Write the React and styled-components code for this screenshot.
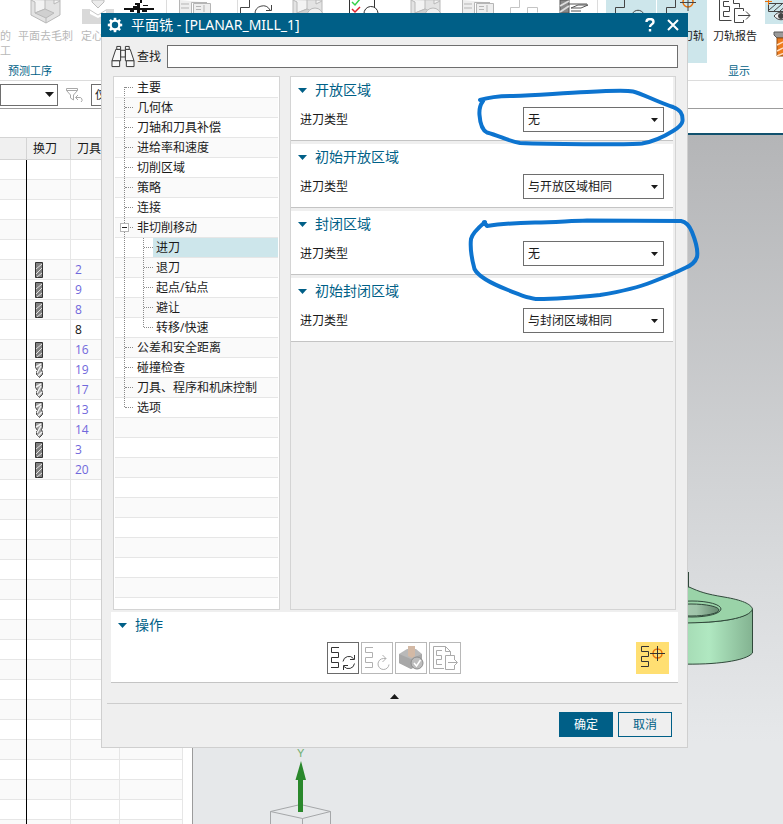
/**
 * ========================================
 * App.jsx - 平面铣 operation dialog over the CAM workspace
 * ========================================
 */

import React from 'react';
import styled, { createGlobalStyle } from 'styled-components';

const GlobalStyle = createGlobalStyle`
  :root {
    --color-primary: #005f87;
    --color-text: #1a1a1a;
    --color-panel: #efefef;
    --color-line: #d4d4d4;
    --color-row-line: #e6e6e6;
    --color-stripe: #fafafa;
    --color-active: #cde6eb;
    --color-field: #6e6e6e;
  }

  * {
    box-sizing: border-box;
  }

  body {
    margin: 0;
    background: #ffffff;
    color: var(--color-text);
    font-family: 'Open Sans', 'Noto Sans CJK SC', sans-serif;
    font-size: 12px;
    line-height: 20px;
  }

  button,
  input,
  select {
    font: inherit;
    color: inherit;
    margin: 0;
  }
`;

/* ---------- data ---------- */

const TOOL_ROWS = [
  {}, {}, {}, {}, {},
  { tool: 'mill', number: 2 },
  { tool: 'mill', number: 9 },
  { tool: 'mill', number: 8 },
  { number: 8, plain: true },
  { tool: 'mill', number: 16 },
  { tool: 'drill', number: 19 },
  { tool: 'drill', number: 17 },
  { tool: 'drill', number: 13 },
  { tool: 'drill', number: 14 },
  { tool: 'mill', number: 3 },
  { tool: 'mill', number: 20 },
  ...Array.from({ length: 18 }, () => ({})),
];

const TREE = [
  { label: '主要', first: true },
  { label: '几何体' },
  { label: '刀轴和刀具补偿' },
  { label: '进给率和速度' },
  { label: '切削区域' },
  { label: '策略' },
  { label: '连接' },
  { label: '非切削移动', expanded: true },
  { label: '进刀', child: true, selected: true },
  { label: '退刀', child: true },
  { label: '起点/钻点', child: true },
  { label: '避让', child: true },
  { label: '转移/快速', child: true, last: true },
  { label: '公差和安全距离' },
  { label: '碰撞检查' },
  { label: '刀具、程序和机床控制' },
  { label: '选项', last: true },
  ...Array.from({ length: 10 }, () => ({})),
];

const SECTIONS = [
  { id: 'open', title: '开放区域', value: '无' },
  { id: 'open-initial', title: '初始开放区域', value: '与开放区域相同' },
  { id: 'closed', title: '封闭区域', value: '无' },
  { id: 'closed-initial', title: '初始封闭区域', value: '与封闭区域相同' },
];

/* ---------- icons ---------- */

const Caret = ({ up = false, small = false, color = 'var(--color-text)' }) => (
  <CaretSvg width={small ? 7 : 9} height={small ? 4 : 5} viewBox="0 0 9 5" preserveAspectRatio="none" aria-hidden="true">
    <path d={up ? 'M0 5h9L4.500 0z' : 'M0 0h9L4.500 5z'} fill={color} />
  </CaretSvg>
);

const GearIcon = () => (
  <svg width="16" height="16" viewBox="0 0 16 16" aria-hidden="true">
    <circle cx="8" cy="8" r="4.400" fill="none" stroke="#fff" strokeWidth="2.400" />
    {[0, 45, 90, 135, 180, 225, 270, 315].map(a => (
      <rect key={a} x="6.700" y="0.800" width="2.600" height="2.800" fill="#fff" transform={`rotate(${a} 8 8)`} />
    ))}
  </svg>
);

const BinocularsIcon = () => (
  <svg width="24" height="24" viewBox="0 0 24 24" fill="#f8f8f8" stroke="#333" aria-hidden="true">
    <path d="M9.500 5.500h5v7h-5z" />
    <path d="M4.500 4.500h5v12h-9zM14.500 4.500h5l4 12h-9z" />
    <path d="M5.500 1.500h4v3h-4zM14.500 1.500h4v3h-4z" />
    <path d="M.5 16.500h8v6h-8zM15.500 16.500h8v6h-8z" />
  </svg>
);

const BoxIcon = ({ badge = false }) => (
  <svg width="32" height="24" viewBox="0 0 32 24" stroke="#b9b9b9" aria-hidden="true">
    <path d="M1 0v15l15 8 14-8V0z" fill="#e3e3e3" />
    <path d="M1 0l4 2v11l10-4V0h9v4l6-3" fill="#f3f3f3" />
    <path d="M5 13l10-4 9 4-8 5zM16 18v5" fill="#d0d0d0" />
    {badge && <circle cx="23" cy="16" r="8" fill="#f0f0f0" />}
  </svg>
);

const SpotDrillIcon = () => (
  <svg width="32" height="24" viewBox="0 0 32 24" aria-hidden="true">
    <path d="M0 9h8v5l8 4 8-4V9h8v15H0z" fill="#d9d9d9" />
    <path d="M8 10l8 5 8-5" fill="none" stroke="#c7c7c7" />
    <path d="M10 0h12v2l-6 6-6-6z" fill="#ececec" stroke="#bdbdbd" />
  </svg>
);

const SparkIcon = () => (
  <svg width="32" height="13" viewBox="0 0 32 13" fill="#111" aria-hidden="true">
    <path d="M1 8h30v2H1zM14 3h3v10h-3zM12 3h4v2h-4zM17 0h2v3h-2zM20 5h5v1h-5zM7 10h4v2H7zM10 6h4v2h-4zM19 10h5v2h-5z" />
  </svg>
);

const ListIcon = () => (
  <svg width="32" height="14" viewBox="0 0 32 14" fill="#eee" stroke="#b5b5b5" aria-hidden="true">
    <path d="M.5 0v13.500h12V2.500H28" />
    <path d="M14.500 3.500h17v10h-17zM17 6.500h5M17 9.500h5M25 5v7M2 4h8M2 8h8" />
  </svg>
);

const StepIcon = ({ kind }) => (
  <svg width="32" height="24" viewBox="0 0 32 24" fill="none" stroke={kind === 'muted' ? '#c4c4c4' : '#444'} aria-hidden="true">
    <path d="M.5 14V7.500h9V0" />
    {kind === 'arrow' && <path d="M15 14a8 8 0 0 1 15-4M31.500 5v5.500H26" />}
    {kind === 'eye' && <path d="M17 14c3-5 9-5 12 0" />}
    {kind === 'muted' && <path d="M17.500 14V7.500h10v5" />}
    {kind === 'target' && (
      <>
        <circle cx="22" cy="2" r="5" stroke="#e8720c" strokeWidth="1.500" />
        <path d="M14 2.500h16M22 0v11" />
      </>
    )}
  </svg>
);

const ChecklistIcon = () => (
  <svg width="32" height="14" viewBox="0 0 32 14" fill="none" aria-hidden="true">
    <path d="M1.500 0v13M26.500 0v8" stroke="#333" />
    <path d="M4 2l3 3 5-6" stroke="#35d04a" strokeWidth="1.500" />
    <path d="M4 9l3 3 5-5" stroke="#e0202c" strokeWidth="1.500" />
    <path d="M16 14a7 7 0 0 1 14-1" stroke="#333" />
  </svg>
);

const CutterIcon = () => (
  <svg width="32" height="14" viewBox="0 0 32 14" fill="none" stroke="#555" aria-hidden="true">
    <path d="M1 0h9v13H1z" fill="#888" />
    <path d="M1 6l9-5M1 12l9-6" stroke="#ddd" strokeWidth="2" />
    <path d="M12 8l7-3h10l-7 3zM12 11h10M10 4h18" />
  </svg>
);

const ReportIcon = () => (
  <svg width="32" height="26" viewBox="0 0 32 26" fill="none" stroke="#444" aria-hidden="true">
    <path d="M.5 0v20.500h12M14.500 0v3.500h6v4" />
    <path d="M10 1.500H4.500v5h6v5h-6v5h6" />
    <path d="M24.500 11V8.500h-9v14h9V20M19 15.500h12M27 11.500l4 4-4 4" />
  </svg>
);

const HatchIcon = () => (
  <svg width="32" height="22" viewBox="0 0 32 22" fill="none" stroke="#444" aria-hidden="true">
    <path d="M3.500 3.500h26v8h-26zM4 10l7-6M9 11l8-7M15 11l8-7" />
    <path d="M9 16c4-5 10-5 14 0-4 5-10 5-14 0z" fill="#eee" />
    <circle cx="16" cy="16" r="2.500" fill="#444" />
    <path d="M0 1.500h7M3.500 0v5" stroke="#e8720c" />
  </svg>
);

const OrangeDrillIcon = () => (
  <svg width="20" height="26" viewBox="0 0 20 26" aria-hidden="true">
    <path d="M1 1h18v3l-3 3H4L1 4z" fill="#9a9a9a" stroke="#5b5b5b" />
    <path d="M4 7h12v18H4z" fill="#ee7b1c" stroke="#8e4a11" />
    <path d="M4 14l12-6M4 20l12-6M4 25l12-5" stroke="#ffe0c0" strokeWidth="1.500" />
  </svg>
);

const FilterIcon = () => (
  <svg width="17" height="16" viewBox="0 0 17 16" fill="none" stroke="#a8a8a8" aria-hidden="true">
    <path d="M.5 1.500h11v2L7.500 8v5l-3-2V8L.5 3.500zM.5 3.500h11" />
    <path d="M10 10.500h3a2.500 2.500 0 0 1 2 4.500M12 8l-2.500 2.500L12 13" />
  </svg>
);

const CutterGlyph = ({ kind }) => (
  <svg width="8" height="16" viewBox="0 0 8 16" aria-hidden="true">
    {kind === 'mill' ? (
      <>
        <path d="M.5.5h7v15h-7z" fill="#808080" stroke="#333" />
        <path d="M1 7l6-5M1 12l6-6M2 15l5-4" stroke="#e2e2e2" />
      </>
    ) : (
      <>
        <path d="M.5.500h7v5l-1 2 1 3v2l-3 3-3-3v-3l1-1-2-3z" fill="#9c9c9c" stroke="#444" />
        <path d="M1 5l5-3M2 11l4-7M3 14l4-4" stroke="#f3f3f3" strokeWidth="1.500" />
      </>
    )}
  </svg>
);

const SNAKE = 'M11 4.500H3.500v5h7v5h-7v5h7v5H3';

const GenerateIcon = () => (
  <svg width="30" height="30" viewBox="0 0 30 30" fill="none" stroke="#333" aria-hidden="true">
    <path d={SNAKE} />
    <path d="M15 18.500a6 6 0 0 1 10.500-3M26.500 12v4.500H22M26.500 20.500a6 6 0 0 1-10.500 3M15.500 27v-4.500H20" />
  </svg>
);

const ReplayIcon = () => (
  <svg width="30" height="30" viewBox="0 0 30 30" fill="none" stroke="#b0b0b0" aria-hidden="true">
    <path d={SNAKE} />
    <path d="M24 15.500h-2.500a5.500 5.500 0 1 0 5.500 6M20.500 12l3.500 3.500-3.500 3.500" />
  </svg>
);

const VerifyIcon = () => (
  <svg width="30" height="30" viewBox="0 0 30 30" aria-hidden="true">
    <path d="M3 11l8-5h9l6 5v9l-11 6-12-6z" fill="#b9b9b9" />
    <path d="M3 11l12 5 11-5v9l-11 6-12-6z" fill="#a8a8a8" />
    <path d="M12 3h7v10l-3 2-4-2z" fill="#d3b9a5" />
    <circle cx="21" cy="20" r="6" fill="#bdbdbd" stroke="#8e8e8e" />
    <path d="M18 20l2.500 3 4-6" fill="none" stroke="#fff" strokeWidth="1.500" />
  </svg>
);

const ListReportIcon = () => (
  <svg width="30" height="30" viewBox="0 0 30 30" fill="none" stroke="#ababab" aria-hidden="true">
    <path d="M14 25.500H3.500V3.500h12l5 5v4M15.500 3.500v5h5" />
    <path d="M12 7.500H6.500v5h5v4h-5v5H12" />
    <path d="M24.500 16v-3.500h-9v14h9V23M18 19.500h9M24 16l3.500 3.500L24 23" />
  </svg>
);

const ShowPathIcon = () => (
  <svg width="32" height="32" viewBox="0 0 32 32" fill="none" stroke="#333" aria-hidden="true">
    <path d="M13 4.500H5.500v5h7v5h-7v5h7v5H5" />
    <circle cx="21.500" cy="11.500" r="4.500" stroke="#e8720c" strokeWidth="1.500" />
    <path d="M14 11.500h15M21.500 4v15" />
  </svg>
);

const HelpIcon = () => (
  <svg width="12" height="14" viewBox="0 0 12 14" fill="none" stroke="#fff" strokeWidth="2.400" aria-hidden="true">
    <path d="M2.500 4c0-4 7-4 7 0 0 2.500-3.500 2-3.500 5" />
    <path d="M6 11v2.500" />
  </svg>
);

const CloseIcon = () => (
  <svg width="12" height="12" viewBox="0 0 12 12" stroke="#fff" strokeWidth="2" aria-hidden="true">
    <path d="M1 1l10 10M11 1L1 11" />
  </svg>
);

/* ---------- workspace behind the dialog ---------- */

const Ribbon = () => (
  <RibbonBar>
    <RibbonGroup $width="167px">
      <RibbonTools>
        <RibbonTool $width="17px" $start disabled>
          <RibbonIcon />
          <span>的<br />工</span>
        </RibbonTool>
        <RibbonTool $width="57px" disabled>
          <RibbonIcon><BoxIcon /></RibbonIcon>
          平面去毛刺
        </RibbonTool>
        <RibbonTool $width="47px" disabled>
          <RibbonIcon><SpotDrillIcon /></RibbonIcon>
          定心钻
        </RibbonTool>
        <RibbonTool $width="36px">
          <RibbonIcon><SparkIcon /></RibbonIcon>
        </RibbonTool>
      </RibbonTools>
      <RibbonLabel $indent="8px">预测工序</RibbonLabel>
    </RibbonGroup>
    <RibbonGroup $width="71px">
      <RibbonTools>
        <RibbonTool $width="56px">
          <RibbonIcon><ListIcon /></RibbonIcon>
        </RibbonTool>
      </RibbonTools>
    </RibbonGroup>
    <RibbonGroup $width="360px">
      <RibbonStrip>
        <StepIcon kind="arrow" />
        <BoxIcon badge />
        <ChecklistIcon />
        <BoxIcon badge />
        <ListIcon />
        <StepIcon kind="muted" />
        <CutterIcon />
      </RibbonStrip>
    </RibbonGroup>
    <RibbonGroup $grow>
      <RibbonTools $indent="8px">
        <RibbonTool $width="51px" $active>
          <RibbonIcon><StepIcon kind="eye" /></RibbonIcon>
        </RibbonTool>
        <RibbonTool $width="51px" $active>
          <RibbonIcon><StepIcon kind="target" /></RibbonIcon>
          显示刀轨
        </RibbonTool>
        <RibbonTool $width="54px">
          <RibbonIcon><ReportIcon /></RibbonIcon>
          刀轨报告
        </RibbonTool>
        <RibbonStack>
          <SmallTool $active aria-label="显示毛坯"><HatchIcon /></SmallTool>
          <SmallTool aria-label="刀具"><OrangeDrillIcon /></SmallTool>
        </RibbonStack>
      </RibbonTools>
      <RibbonLabel $indent="130px">显示</RibbonLabel>
    </RibbonGroup>
  </RibbonBar>
);

const ToolTable = () => (
  <TablePane>
    <Table>
      <colgroup>
        <TableCol $width="27px" />
        <TableCol $width="44px" />
        <TableCol $width="49px" />
        <TableCol $width="63px" />
      </colgroup>
      <thead>
        <tr>
          <HeadCell />
          <HeadCell>换刀</HeadCell>
          <HeadCell>刀具号</HeadCell>
          <HeadCell />
        </tr>
      </thead>
      <tbody>
        {TOOL_ROWS.map((row, i) => (
          <BodyRow key={i}>
            <BodyCell $heavy />
            <BodyCell $icon>{row.tool && <CutterGlyph kind={row.tool} />}</BodyCell>
            <BodyCell $plain={row.plain}>{row.number}</BodyCell>
            <BodyCell />
          </BodyRow>
        ))}
      </tbody>
    </Table>
  </TablePane>
);

const Scene = () => (
  <SceneSvg width="590" height="689" viewBox="193 135 590 689" aria-hidden="true">
    <defs>
      <linearGradient id="side" x1="0" x2="1">
        <stop offset="0" stopColor="#a3d8b2" />
        <stop offset="0.4" stopColor="#b0e8c1" />
        <stop offset="1" stopColor="#83b391" />
      </linearGradient>
      <linearGradient id="hole" x1="0" x2="1">
        <stop offset="0" stopColor="#b4d4bc" />
        <stop offset="0.600" stopColor="#9fc4a9" />
        <stop offset="1" stopColor="#64876e" />
      </linearGradient>
    </defs>
    <path d="M680 622C720 624 748 618 752.500 609V653C746 661 715 665 680 664z" fill="url(#side)" stroke="#30483a" />
    <path d="M680 587H689C700 592 706 594 724 597C742 600 751 604 752.500 609C750 618 722 623 680 623z" fill="#9ad3a8" stroke="#30483a" />
    <ellipse cx="692" cy="609" rx="29" ry="8" fill="#9ad3a8" stroke="#30483a" />
    <ellipse cx="691" cy="610" rx="28" ry="6" fill="url(#hole)" stroke="#30483a" />
    <path d="M688.500 572v15" stroke="#30483a" />
    <path d="M270.500 811.500L300.500 804.500L330.500 811.500L302.500 818.500zM270.500 811.500V824M302.500 818.500V824M330.500 811.500V824" fill="none" stroke="#a5a7a9" />
    <path d="M298 812V780H295.500L301 761L306 780H303V812z" fill="#2a882c" />
    <AxisLabel x="297" y="757">Y</AxisLabel>
  </SceneSvg>
);

/* ---------- dialog ---------- */

const TreeItem = ({ label, first, expanded, child, selected, last }) => {
  if (!label) return <TreeRow aria-hidden="true" />;

  return (
    <TreeRow>
      {expanded ? (
        <ExpandColumn>
          <ExpandButton aria-label="折叠" aria-expanded="true">
            <svg width="7" height="7" viewBox="0 0 7 7" aria-hidden="true">
              <path d="M1 3.500h5" stroke="#222" />
            </svg>
          </ExpandButton>
        </ExpandColumn>
      ) : (
        <Branch $first={first} $end={last && !child}>
          <BranchArm $joined={!child} />
        </Branch>
      )}
      {child && (
        <Branch $end={last} $nested>
          <BranchArm $joined />
        </Branch>
      )}
      <TreeButton $child={child} $selected={selected} aria-current={selected ? 'true' : undefined}>{label}</TreeButton>
    </TreeRow>
  );
};

const ParameterSection = ({ id, title, value }) => (
  <Section>
    <SectionTitle><Caret color="var(--color-primary)" />{title}</SectionTitle>
    <Field>
      <label htmlFor={id}>进刀类型</label>
      <SelectBox>
        <Select id={id} defaultValue={value}>
          <option>{value}</option>
        </Select>
        <Caret small />
      </SelectBox>
    </Field>
  </Section>
);

const OperationDialog = () => (
  <Dialog role="dialog" aria-labelledby="dialog-title">
    <TitleBar>
      <GearIcon />
      <Title id="dialog-title">平面铣 - [PLANAR_MILL_1]</Title>
      <TitleButton aria-label="帮助"><HelpIcon /></TitleButton>
      <TitleButton aria-label="关闭"><CloseIcon /></TitleButton>
    </TitleBar>
    <DialogBody>
      <SearchRow>
        <BinocularsIcon />
        <label htmlFor="search">查找</label>
        <SearchInput id="search" type="text" />
      </SearchRow>
      <Columns>
        <Tree aria-label="平面铣">
          {TREE.map((item, i) => <TreeItem key={i} {...item} />)}
        </Tree>
        <Parameters>
          {SECTIONS.map(section => <ParameterSection key={section.id} {...section} />)}
        </Parameters>
      </Columns>
      <Actions>
        <SectionTitle><Caret color="var(--color-primary)" />操作</SectionTitle>
        <ActionRow>
          <ActionGroup>
            <ActionButton $strong aria-label="生成"><GenerateIcon /></ActionButton>
            <ActionButton aria-label="重播"><ReplayIcon /></ActionButton>
            <ActionButton aria-label="确认"><VerifyIcon /></ActionButton>
            <ActionButton aria-label="列表"><ListReportIcon /></ActionButton>
          </ActionGroup>
          <HighlightButton aria-label="显示刀轨"><ShowPathIcon /></HighlightButton>
        </ActionRow>
      </Actions>
      <CollapseButton aria-label="收起"><Caret up /></CollapseButton>
      <Footer>
        <FooterButton $primary>确定</FooterButton>
        <FooterButton>取消</FooterButton>
      </Footer>
    </DialogBody>
  </Dialog>
);

// hand-drawn marks round the two 无 drop-downs
const Annotations = () => (
  <AnnotationSvg width="783" height="320" viewBox="0 0 783 320" aria-hidden="true">
    <path d="M480 100C490 97 500 96 513 96C540 95 562 93 587 92C605 91 625 90 633 91.500C641 93 655 101 673 107C680 110 683 113 682.500 121C682 125 678 128 673 131C665 136 652 142 642 143.500C625 145 545 144 520 143C508 141 500 136 487 132.500C482 130 480 122 479.500 115C479 109 480 105 483 101" />
    <path d="M484 222L487 226C500 224 515 223 535 222.500C555 222 570 221 587 220.500L681 221C687 222 690 227 692 232C696 242 698 252 697 257C695 263 690 266 685 268C675 273 665 277 652 282C635 289 618 292 600 295C580 297 558 299 538 299C530 299 520 295 508 290C490 283 478 276 474.500 269C472 260 470 248 471 239C472 234 478 228 485 222" />
  </AnnotationSvg>
);

const App = () => (
  <Page>
    <GlobalStyle />
    <Ribbon />
    <SelectionBar>
      <FilterSelectBox $width="58px">
        <FilterSelect aria-label="类型过滤器"><option /></FilterSelect>
        <Caret />
      </FilterSelectBox>
      <FilterIcon />
      <FilterSelectBox $width="140px">
        <FilterSelect aria-label="选择范围"><option>仅在工作部件内</option></FilterSelect>
        <Caret />
      </FilterSelectBox>
    </SelectionBar>
    <Workspace>
      <ToolTable />
      <Viewport><Scene /></Viewport>
    </Workspace>
    <OperationDialog />
    <Annotations />
  </Page>
);

/* ---------- styles: workspace ---------- */

const Page = styled.div`
  position: relative;
  display: flex;
  flex-direction: column;
  height: 100vh;
  min-height: 760px;
  overflow: hidden;
`;

const CaretSvg = styled.svg`
  flex: none;
  display: block;
`;

const RibbonBar = styled.header`
  display: flex;
  flex: none;
  height: 81px;
  overflow: hidden;
  border-bottom: 1px solid #dcdcdc;
  font-size: 11px;
  line-height: 15px;
`;

const RibbonGroup = styled.div`
  flex: ${props => (props.$grow ? '1 0 0' : `0 0 ${props.$width}`)};
  min-width: 0;
  overflow: hidden;
  border-right: ${props => (props.$grow ? '0' : '1px solid #dcdcdc')};
`;

const RibbonTools = styled.div`
  display: flex;
  height: 63px;
  padding-left: ${props => props.$indent || '0'};
`;

const RibbonTool = styled.button`
  display: flex;
  flex-direction: column;
  flex: 0 0 ${props => props.$width};
  align-items: ${props => (props.$start ? 'flex-start' : 'center')};
  padding: 0;
  overflow: hidden;
  border: 0;
  border-right: ${props => (props.$active ? '1px solid #fff' : '0')};
  background: ${props => (props.$active ? 'var(--color-active)' : 'transparent')};
  white-space: nowrap;

  &:disabled {
    color: #b8b8b8;
  }
`;

const RibbonIcon = styled.span`
  display: block;
  flex: none;
  height: 28px;
`;

const RibbonStrip = styled.div`
  display: grid;
  grid-template-columns: 52px 56px 62px 52px 48px 49px 1fr;
  padding-left: 2px;
`;

const RibbonStack = styled.div`
  display: flex;
  flex-direction: column;
  gap: 7px;
  padding-left: 3px;
`;

const SmallTool = styled.button`
  display: block;
  width: 40px;
  height: 24px;
  padding: 0;
  border: 0;
  background: ${props => (props.$active ? 'var(--color-active)' : 'transparent')};
  text-align: left;

  & + & {
    padding-left: 8px;
  }
`;

const RibbonLabel = styled.div`
  padding-left: ${props => props.$indent};
  color: var(--color-primary);
`;

const SelectionBar = styled.div`
  display: flex;
  flex: none;
  gap: 8px;
  align-items: center;
  height: 28px;
  border-bottom: 1px solid #9c9c9c;
  font-size: 11px;
`;

const FilterSelectBox = styled.div`
  display: grid;
  flex: 0 0 ${props => props.$width};
  align-items: center;

  > * {
    grid-area: 1 / 1;
  }

  > svg {
    justify-self: end;
    margin-right: 4px;
    pointer-events: none;
  }
`;

const FilterSelect = styled.select`
  width: 100%;
  height: 22px;
  padding: 0 3px;
  border: 1px solid var(--color-field);
  border-radius: 0;
  background: #fff;
  appearance: none;
`;

const Workspace = styled.main`
  display: flex;
  flex: 1;
  min-height: 0;
`;

const TablePane = styled.div`
  flex: 0 0 192px;
  margin-top: 28px;
  overflow: hidden;
`;

const Table = styled.table`
  width: 183px;
  table-layout: fixed;
  border-spacing: 0;
  border-top: 1px solid var(--color-line);
`;

const TableCol = styled.col`
  width: ${props => props.$width};
`;

const HeadCell = styled.th`
  height: 22px;
  padding: 0 0 0 6px;
  overflow: hidden;
  border-right: 1px solid var(--color-line);
  border-bottom: 1px solid var(--color-line);
  background: #f0f0f0;
  font-weight: 400;
  text-align: left;
  white-space: nowrap;
`;

const BodyRow = styled.tr`
  &:nth-child(even) {
    background: var(--color-stripe);
  }
`;

const BodyCell = styled.td`
  height: 20px;
  padding: 0 0 0 ${props => (props.$icon ? '8px' : '4px')};
  border-right: 1px solid ${props => (props.$heavy ? '#000' : 'var(--color-row-line)')};
  box-shadow: inset 0 -1px 0 var(--color-row-line);
  color: ${props => (props.$plain ? '#111' : '#7068dc')};
  line-height: 20px;

  svg {
    display: block;
  }
`;

const Viewport = styled.div`
  flex: 1;
  min-width: 0;
  margin-top: 24px;
  overflow: hidden;
  border-top: 2px solid #11516e;
  border-left: 1px solid #9b9b9b;
  background: linear-gradient(#b4b5b7, #d8dadc 62%, #e6e8ea 88%);
`;

const SceneSvg = styled.svg`
  display: block;
`;

const AxisLabel = styled.text`
  fill: #6fae70;
  font-family: 'Liberation Sans', sans-serif;
  font-size: 11px;
`;

/* ---------- styles: dialog ---------- */

const Dialog = styled.section`
  position: absolute;
  top: 13px;
  left: 101px;
  right: 95px;
`;

const TitleBar = styled.header`
  display: flex;
  gap: 8px;
  align-items: center;
  height: 24px;
  padding: 0 8px 0 6px;
  background: var(--color-primary);
  color: #fff;
`;

const Title = styled.h1`
  flex: 1;
  margin: 0;
  font-family: 'Noto Sans', 'Noto Sans CJK SC', sans-serif;
  font-size: 14px;
  font-weight: 400;
  line-height: 24px;
`;

const TitleButton = styled.button`
  display: grid;
  place-items: center;
  width: 15px;
  height: 20px;
  padding: 0;
  border: 0;
  background: transparent;
`;

const DialogBody = styled.div`
  border: 1px solid #cfcfcf;
  border-top: 0;
  background: var(--color-panel);
`;

const SearchRow = styled.div`
  display: flex;
  align-items: center;
  padding: 8px 9px;

  label {
    flex: none;
    padding: 0 6px 0 2px;
  }

  > svg {
    flex: none;
    height: 23px;
  }
`;

const SearchInput = styled.input`
  flex: 1;
  min-width: 0;
  height: 23px;
  padding: 0 4px;
  border: 1px solid var(--color-field);
  background: #fff;
`;

const Columns = styled.div`
  display: flex;
  gap: 10px;
  height: 534px;
  padding: 0 11px;
`;

const Tree = styled.nav`
  flex: 0 0 167px;
  padding: 1px;
  overflow: hidden;
  border: 1px solid var(--color-line);
  background: #fff;
`;

const TreeRow = styled.div`
  display: flex;
  height: 20px;
  padding-left: 9px;
  border-bottom: 1px solid var(--color-row-line);

  &:nth-child(even) {
    background: var(--color-stripe);
  }
`;

const Branch = styled.span`
  flex: none;
  width: ${props => (props.$nested ? '10px' : '9px')};
  margin-left: ${props => (props.$nested ? '10px' : '0')};
  border-left: 1px dotted ${props => (props.$end || props.$first ? 'transparent' : '#8a8a8a')};
  background: ${props => (props.$end
    ? 'repeating-linear-gradient(#8a8a8a 0 1px, transparent 1px 2px) border-box left top / 1px 10px no-repeat'
    : props.$first
      ? 'repeating-linear-gradient(#8a8a8a 0 1px, transparent 1px 2px) border-box left bottom / 1px 10px no-repeat'
      : 'none')};
`;

const BranchArm = styled.span`
  display: block;
  height: 10px;
  border-bottom: 1px dotted ${props => (props.$joined ? '#8a8a8a' : 'transparent')};
`;

const ExpandColumn = styled.span`
  display: grid;
  place-items: center start;
  flex: none;
  width: 13px;
  height: 19px;
  margin-left: -4px;
  background:
    repeating-linear-gradient(#8a8a8a 0 1px, transparent 1px 2px) 4px 0 / 1px 19px no-repeat,
    repeating-linear-gradient(90deg, #8a8a8a 0 1px, transparent 1px 2px) 10px 9px / 3px 1px no-repeat;
`;

const ExpandButton = styled.button`
  display: grid;
  place-items: center;
  width: 9px;
  height: 9px;
  padding: 0;
  border: 1px solid #b5b5b5;
  background: #fff;
`;

const TreeButton = styled.button`
  flex: 1;
  padding: 0 0 0 ${props => (props.$child ? '3px' : '4px')};
  border: 0;
  background: ${props => (props.$selected ? 'var(--color-active)' : 'transparent')};
  line-height: 19px;
  text-align: left;
  white-space: nowrap;
`;

const Parameters = styled.div`
  display: flex;
  flex-direction: column;
  flex: 1;
  gap: 3px;
  min-width: 0;
  padding-right: 2px;
  border: 1px solid var(--color-line);
`;

const Section = styled.section`
  height: 64px;
  border-bottom: 1px solid #c4c4c4;
  background: #fff;
`;

const SectionTitle = styled.h2`
  display: flex;
  gap: 8px;
  align-items: center;
  height: 26px;
  margin: 0;
  padding-left: 7px;
  color: var(--color-primary);
  font-size: 14px;
  font-weight: 400;
`;

const Field = styled.div`
  display: flex;
  align-items: center;
  justify-content: space-between;
  padding: 4px 9px 0;
`;

const SelectBox = styled.div`
  display: grid;
  align-items: center;
  width: 141px;

  > * {
    grid-area: 1 / 1;
  }

  > svg {
    justify-self: end;
    margin-right: 6px;
    pointer-events: none;
  }
`;

const Select = styled.select`
  width: 100%;
  height: 25px;
  padding: 0 4px;
  border: 1px solid var(--color-field);
  border-radius: 0;
  background: #fff;
  appearance: none;
`;

const Actions = styled.section`
  height: 71px;
  margin: 2px 9px 0;
  border-bottom: 1px solid #c4c4c4;
  background: #fff;
`;

const ActionRow = styled.div`
  display: grid;
  grid-template-columns: 1fr auto 1fr;
  padding: 4px 9px 0 7px;
`;

const ActionGroup = styled.div`
  display: flex;
  grid-column: 2;
  gap: 2px;
`;

const ActionButton = styled.button`
  width: 32px;
  height: 32px;
  padding: 0;
  border: 1px solid ${props => (props.$strong ? '#6a6a6a' : '#b8b8b8')};
  background: #fff;

  svg {
    display: block;
  }
`;

const HighlightButton = styled.button`
  justify-self: end;
  width: 33px;
  height: 32px;
  padding: 0;
  border: 0;
  background: #ffdf72;

  svg {
    display: block;
  }
`;

const CollapseButton = styled.button`
  display: grid;
  place-items: center;
  width: 100%;
  height: 20px;
  padding: 7px 0 0;
  border: 0;
  background: transparent;
`;

const Footer = styled.footer`
  display: flex;
  gap: 5px;
  justify-content: flex-end;
  margin: 0 5px;
  padding: 8px 10px 10px;
  border-top: 1px solid #cdcdcd;
`;

const FooterButton = styled.button`
  width: 54px;
  height: 25px;
  padding: 0;
  border: 1px solid var(--color-primary);
  background: ${props => (props.$primary ? 'var(--color-primary)' : 'transparent')};
  color: ${props => (props.$primary ? '#fff' : 'var(--color-primary)')};
`;

const AnnotationSvg = styled.svg`
  position: absolute;
  top: 0;
  left: 0;
  fill: none;
  stroke: #0d74cf;
  stroke-width: 4px;
  stroke-linecap: round;
  stroke-linejoin: round;
  pointer-events: none;
`;

export default App;
